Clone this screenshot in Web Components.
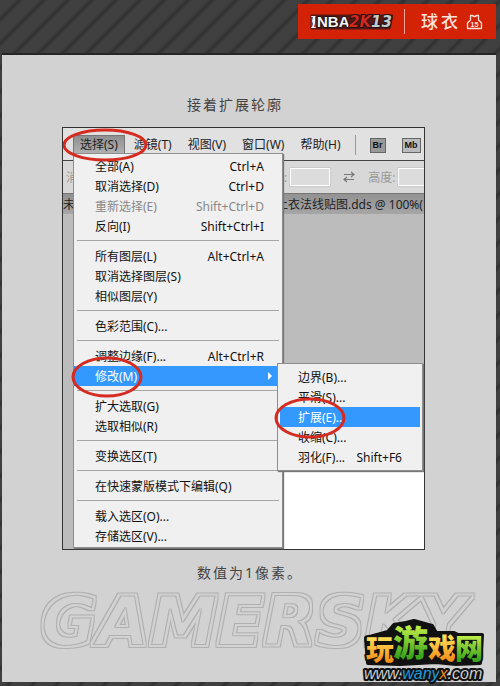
<!DOCTYPE html>
<html lang="zh-CN">
<head>
<meta charset="utf-8">
<meta name="viewport" content="width=device-width, initial-scale=1">
<title>接着扩展轮廓</title>
<style>
    body {
        margin: 0;
        min-height: 100vh;
        font-family: "Noto Sans", "Noto Sans CJK SC", sans-serif;
        font-size: 12px;
        color: #111;
        background: #3d3d3d repeating-linear-gradient(135deg, #404040 0, #3f3f3f 11px, #303030 14px, #404040 17px);
    }
</style>
</head>
<body>
<guide-page>
    <game-banner slot="banner">球衣</game-banner>
    <guide-caption style="--indent: 125px">接着扩展轮廓</guide-caption>
    <editor-window>
        <menu-title slot="menubar" active>选择(S)</menu-title>
        <menu-title slot="menubar">滤镜(T)</menu-title>
        <menu-title slot="menubar">视图(V)</menu-title>
        <menu-title slot="menubar">窗口(W)</menu-title>
        <menu-title slot="menubar">帮助(H)</menu-title>
        <menu-panel slot="menu">
            <menu-entry keys="Ctrl+A">全部(A)</menu-entry>
            <menu-entry keys="Ctrl+D">取消选择(D)</menu-entry>
            <menu-entry keys="Shift+Ctrl+D" disabled>重新选择(E)</menu-entry>
            <menu-entry keys="Shift+Ctrl+I">反向(I)</menu-entry>
            <menu-line></menu-line>
            <menu-entry keys="Alt+Ctrl+A">所有图层(L)</menu-entry>
            <menu-entry>取消选择图层(S)</menu-entry>
            <menu-entry>相似图层(Y)</menu-entry>
            <menu-line></menu-line>
            <menu-entry>色彩范围(C)...</menu-entry>
            <menu-line></menu-line>
            <menu-entry keys="Alt+Ctrl+R">调整边缘(F)...</menu-entry>
            <menu-entry active submenu>修改(M)
                <menu-panel slot="submenu" class="sub">
                    <menu-entry>边界(B)...</menu-entry>
                    <menu-entry>平滑(S)...</menu-entry>
                    <menu-entry active>扩展(E)...</menu-entry>
                    <menu-entry>收缩(C)...</menu-entry>
                    <menu-entry keys="Shift+F6">羽化(F)...</menu-entry>
                </menu-panel>
            </menu-entry>
            <menu-line></menu-line>
            <menu-entry>扩大选取(G)</menu-entry>
            <menu-entry>选取相似(R)</menu-entry>
            <menu-line></menu-line>
            <menu-entry>变换选区(T)</menu-entry>
            <menu-line></menu-line>
            <menu-entry>在快速蒙版模式下编辑(Q)</menu-entry>
            <menu-line></menu-line>
            <menu-entry>载入选区(O)...</menu-entry>
            <menu-entry>存储选区(V)...</menu-entry>
        </menu-panel>
    </editor-window>
    <guide-caption style="--indent: 135px">数值为1像素。</guide-caption>
    <outline-mark slot="mark"></outline-mark>
    <site-logo slot="logo"></site-logo>
</guide-page>

<script>
class BaseElement extends HTMLElement {
    constructor() {
        super();
        const template = document.createElement('template');
        template.innerHTML = this.constructor.markup;
        this.attachShadow({ mode: 'open' });
        this.shadowRoot.appendChild(template.content.cloneNode(true));
    }
}

class GuidePage extends BaseElement {
    static markup = `
        <style>
            :host { display: flex; flex-direction: column; min-height: 100vh; box-sizing: border-box; padding: 0 4px 4px 2px; }
            header { display: flex; justify-content: flex-end; box-sizing: border-box; min-height: 55px; padding: 4px 0 0; border-bottom: 2px solid #262626; }
            main { position: relative; flex: 1; background: #d2d2d2; display: flex; flex-direction: column; }
            article { padding: 36px 71px 0 60px; }
            ::slotted([slot="logo"]) { position: absolute; right: 4px; bottom: -4px; }
        </style>
        <header><slot name="banner"></slot></header>
        <main>
            <article><slot></slot></article>
            <slot name="mark"></slot>
            <slot name="logo"></slot>
        </main>
    `;
}
customElements.define('guide-page', GuidePage);

class GameBanner extends BaseElement {
    static markup = `
        <style>
            :host { display: flex; align-items: center; box-sizing: border-box; width: 198px; height: 35px; padding: 0 13px 0 11px; background: #d42207; color: #fbe3dc; }
            .line { width: 1px; height: 25px; margin: 0 16px 0 11px; background: #f0a595; }
            .title { flex: 1; font-size: 17px; line-height: 24px; font-weight: 500; letter-spacing: 3px; white-space: nowrap; }
            svg { flex: none; }
        </style>
        <svg width="84" height="18" viewBox="0 0 84 18" role="img" aria-label="NBA 2K13">
            <path d="M2 2H84L81 16H2Z" fill="#571714" stroke="#571714" stroke-linejoin="round"/>
            <rect x="2" y="3" width="5" height="12" rx="1" fill="#f2f2f2"/>
            <path d="M2 4h2L3 8l1 3-1 3H2z" fill="#2c4a9b"/>
            <path d="M6 4l1-1v11H5l1-4z" fill="#d42207"/>
            <g font-weight="bold" stroke="#251313" stroke-width="2" paint-order="stroke" stroke-linejoin="round">
                <text x="8" y="14" font-family="Liberation Sans, sans-serif" font-size="15" fill="#f6f6f6">NBA</text>
                <text x="40" y="14" font-family="DejaVu Sans, sans-serif" font-size="15" fill="#d0281c" font-style="italic">2K</text>
                <text x="62" y="14" font-family="DejaVu Sans, sans-serif" font-size="15" fill="#c3ccd0" font-style="italic">13</text>
            </g>
        </svg>
        <span class="line"></span>
        <span class="title"><slot></slot></span>
        <svg width="17" height="16" viewBox="0 0 17 16">
            <path d="M4.500 1.500h2c1 1.300 3 1.300 4 0h2v4.500l3 3v5.500h-14V9l3-3z" fill="none" stroke="#fbe3dc" stroke-width="1.300" stroke-linejoin="round"/>
            <text x="8.500" y="13" text-anchor="middle" font-family="Liberation Sans, sans-serif" font-size="7" font-weight="bold" fill="#fbe3dc">15</text>
        </svg>
    `;
}
customElements.define('game-banner', GameBanner);

class GuideCaption extends BaseElement {
    static markup = `
        <style>
            :host { display: block; padding: 4px 0 12px var(--indent, 124px); font-size: 14px; line-height: 20px; letter-spacing: 2px; color: #444; white-space: nowrap; }
            p { margin: 0; }
        </style>
        <p><slot></slot></p>
    `;
}
customElements.define('guide-caption', GuideCaption);

class EditorWindow extends BaseElement {
    static markup = `
        <style>
            :host { display: grid; border: 1px solid #333; margin-bottom: 9px; background: #bcbcbc; }
            .app, .menu { grid-area: 1 / 1; min-width: 0; }
            .app { display: flex; flex-direction: column; overflow: hidden; }
            .menu { justify-self: start; padding: 25px 0 1px 10px; }
            .bar { display: flex; align-items: center; white-space: nowrap; }
            nav { gap: 2px; height: 30px; padding: 2px 0 0 10px; background: #e1e1e1; border-bottom: 1px solid #444; }
            .split { flex: none; width: 1px; height: 20px; margin: 0 12px 0 5px; background: #999; }
            .badge { flex: none; box-sizing: border-box; width: 16px; height: 15px; border: 1px solid #666; background: #999; font: bold 9px/13px "Liberation Sans", sans-serif; text-align: center; }
            .badge.wide { width: 19px; margin-left: 14px; background: #bbb; }
            .options { gap: 4px; height: 32px; padding-left: 3px; background: #d8d8d8; color: #999; border-bottom: 1px solid #777; }
            .options label { display: flex; flex: none; align-items: center; gap: 3px; }
            .options .first { margin-left: 202px; }
            .options svg { flex: none; margin: 0 9px; }
            input { box-sizing: border-box; width: 40px; height: 18px; padding: 0; border: 1px solid #fff; outline: 1px solid #ccc; background: #dcdcdc; }
            .tab { height: 20px; background: linear-gradient(#929292, #a6a6a6); color: #222; }
            .tab .name { margin-left: 201px; }
            .canvas { flex: 1; display: flex; align-items: flex-end; }
            .paper { flex: 1; height: 90px; background: #fff; border-top: 12px solid #111; box-sizing: border-box; margin-left: 210px; }
        </style>
        <div class="app">
            <nav class="bar">
                <slot name="menubar"></slot>
                <span class="split"></span>
                <span class="badge">Br</span>
                <span class="badge wide">Mb</span>
            </nav>
            <div class="bar options">
                <span>消</span>
                <label class="first">:<input aria-label="宽度"></label>
                <svg width="12" height="12" viewBox="0 0 12 12" fill="none" stroke="#777" stroke-width="1.200">
                    <path d="M1 3.500h10M8 1l3 2.500L8 6M11 8.500H1M4 6L1 8.500 4 11"/>
                </svg>
                <label>高度:<input></label>
            </div>
            <div class="bar tab"><span>未</span><span class="name">上衣法线贴图.dds @ 100%(</span></div>
            <div class="canvas"><div class="paper"></div></div>
        </div>
        <div class="menu"><slot name="menu"></slot></div>
    `;
}
customElements.define('editor-window', EditorWindow);

class MenuTitle extends BaseElement {
    static markup = `
        <style>
            :host { display: block; position: relative; flex: none; }
            button { display: block; height: 20px; padding: 0 7px; border: 0; background: none; font: inherit; line-height: 20px; color: #222; }
            :host([active]) button { background: linear-gradient(#8d8d8d, #b4b4b4); box-shadow: inset 0 0 0 1px #777; }
            svg { display: none; position: absolute; left: -11px; top: -7px; z-index: 4; pointer-events: none; }
            :host([active]) svg { display: block; }
        </style>
        <button type="button"><slot></slot></button>
        <svg width="86" height="34" viewBox="0 0 86 34"><ellipse cx="43" cy="17" rx="41" ry="15" fill="none" stroke="#d52b20" stroke-width="3"/></svg>
    `;
}
customElements.define('menu-title', MenuTitle);

class MenuPanel extends BaseElement {
    static markup = `
        <style>
            :host { display: block; position: relative; box-sizing: border-box; width: 210px; padding: 2px 0 1px; border: 1px solid #8d8d8d; background: #f0f0f0; box-shadow: 1px 1px 1px #777; color: #111; --entry-pad: 21px; }
            :host(.sub) { width: 146px; padding: 3px 2px; --entry-pad: 18px; }
        </style>
        <div role="menu"><slot></slot></div>
    `;
}
customElements.define('menu-panel', MenuPanel);

class MenuEntry extends BaseElement {
    static get observedAttributes() {
        return ['keys', 'disabled'];
    }

    static markup = `
        <style>
            :host { display: block; position: relative; }
            button { display: flex; justify-content: space-between; box-sizing: border-box; width: 100%; height: 20px; padding: 0 18px 0 var(--entry-pad); border: 0; background: none; font: inherit; line-height: 22px; color: inherit; text-align: left; white-space: nowrap; }
            :host([disabled]) button { color: #888; }
            :host([active]) button { background: #3399ff; color: #fff; }
            :host([submenu]) button { padding-right: 9px; }
            .keys:empty, .arrow, .ring { display: none; }
            :host([submenu]) .arrow { display: block; align-self: center; }
            :host([active]) .ring { display: block; position: absolute; left: calc(var(--entry-pad) - 24px); top: -10px; z-index: 3; pointer-events: none; }
            ::slotted(menu-panel) { position: absolute !important; left: 203px; top: -3px; z-index: 2; }
        </style>
        <button type="button" role="menuitem">
            <span><slot></slot></span>
            <span class="keys"></span>
            <svg class="arrow" width="5" height="8" viewBox="0 0 5 8"><path d="M0 0l4 4-4 4z" fill="#fff"/></svg>
        </button>
        <slot name="submenu"></slot>
        <svg class="ring" width="72" height="42" viewBox="0 0 72 42"><ellipse cx="36" cy="21" rx="34" ry="19" fill="none" stroke="#d52b20" stroke-width="3"/></svg>
    `;

    attributeChangedCallback(name, oldValue, newValue) {
        if (name === 'keys') {
            this.shadowRoot.querySelector('.keys').textContent = newValue;
        } else {
            this.shadowRoot.querySelector('button').disabled = newValue !== null;
        }
    }
}
customElements.define('menu-entry', MenuEntry);

class MenuLine extends BaseElement {
    static markup = `
        <style>
            :host { display: block; padding: 4px 3px 5px; }
            hr { margin: 0; border: 0; border-top: 1px solid #a5a5a5; }
        </style>
        <hr>
    `;
}
customElements.define('menu-line', MenuLine);

// Large watermark word drawn as two thin parallel outlines
class OutlineMark extends BaseElement {
    static markup = `
        <style>
            :host { display: block; padding: 0 16px 0 36px; }
            svg { display: block; width: 100%; height: auto; overflow: visible; }
        </style>
        <svg viewBox="0 0 442 60">
            <filter id="rings" x="-5%" y="-10%" width="110%" height="120%">
                <feMorphology in="SourceAlpha" operator="dilate" radius="3" result="far"/>
                <feMorphology in="SourceAlpha" operator="dilate" radius="2" result="mid"/>
                <feMorphology in="SourceAlpha" operator="erode" radius="1" result="near"/>
                <feComposite in="far" in2="mid" operator="out" result="outer"/>
                <feComposite in="SourceAlpha" in2="near" operator="out" result="inner"/>
                <feMerge result="both"><feMergeNode in="outer"/><feMergeNode in="inner"/></feMerge>
                <feFlood flood-color="#b0b0b0"/>
                <feComposite in2="both" operator="in"/>
            </filter>
            <text x="3" y="50" font-family="DejaVu Sans, sans-serif" font-size="68" font-weight="bold" font-style="italic" filter="url(#rings)">GAMERSKY</text>
        </svg>
    `;
}
customElements.define('outline-mark', OutlineMark);

class SiteLogo extends BaseElement {
    static markup = `
        <style>
            :host { display: block; }
            svg { display: block; overflow: visible; }
        </style>
        <svg width="128" height="64" viewBox="0 0 128 64">
            <defs>
                <linearGradient id="gold" x2="0" y2="1"><stop offset="0.200" stop-color="#ffe45c"/><stop offset="0.800" stop-color="#f6921e"/></linearGradient>
                <linearGradient id="leaf" x2="0" y2="1"><stop offset="0.200" stop-color="#c5f04a"/><stop offset="0.800" stop-color="#3da51c"/></linearGradient>
            </defs>
            <path d="M2 16L24 10 30 3 42 1 50-1 68 4 72 11 90 11 94 13 118 13 116 41 92 42 72 40 36 42 4 41Z" fill="#111" stroke="#111" stroke-width="4" stroke-linejoin="round"/>
            <g font-family="Noto Sans CJK SC, sans-serif" font-weight="900" stroke="#111" stroke-width="4" paint-order="stroke" stroke-linejoin="round">
                <text x="2" y="38" font-size="28" fill="url(#gold)">玩</text>
                <text x="29" y="34" font-size="35" fill="url(#leaf)">游</text>
                <text x="64" y="37" font-size="28" fill="url(#gold)">戏</text>
                <text x="91" y="37" font-size="28" fill="url(#leaf)">网</text>
            </g>
            <text x="0" y="57" font-family="Liberation Sans, sans-serif" font-size="16" font-style="italic" fill="#ccc" stroke="#111" stroke-width="4" paint-order="stroke" stroke-linejoin="round">www.<tspan fill="#1f9bdc">wany</tspan><tspan fill="#f08a1c">x</tspan>.com</text>
        </svg>
    `;
}
customElements.define('site-logo', SiteLogo);
</script>
</body>
</html>
